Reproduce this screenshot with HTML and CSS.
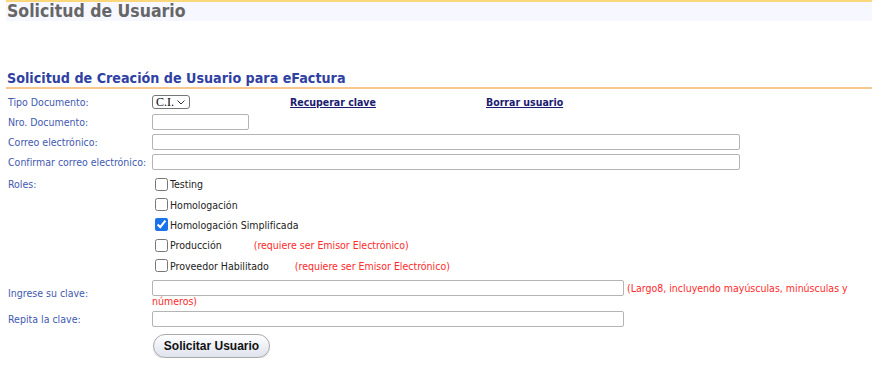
FILE: index.html
```html
<!DOCTYPE html>
<html lang="es">
<head>
    <meta charset="UTF-8">
    <title>Solicitud de Usuario</title>
    <link rel="stylesheet" href="styles.css">
</head>
<body>
    <div class="page">
        <div class="title-bar">Solicitud de Usuario</div>

        <h2 class="section-title">Solicitud de Creación de Usuario para eFactura</h2>

        <form class="form-grid" onsubmit="return false">
            <label class="field-label">Tipo Documento:</label>
            <div class="field first-row">
                <div class="cell-select">
                    <span class="select-wrap">
                        <select class="doc-type">
                            <option>C.I.</option>
                            <option>RUT</option>
                            <option>Pasaporte</option>
                        </select>
                        <svg class="select-arrow" width="8" height="5" viewBox="0 0 8 5"><path d="M0.5 0.5 L4 4 L7.5 0.5" fill="none" stroke="#333" stroke-width="1"/></svg>
                    </span>
                </div>
                <div class="cell-link"><a href="#">Recuperar clave</a></div>
                <div class="cell-link"><a href="#">Borrar usuario</a></div>
            </div>

            <label class="field-label">Nro. Documento:</label>
            <div class="field"><input type="text" class="input-short"></div>

            <label class="field-label">Correo electrónico:</label>
            <div class="field"><input type="text" class="input-long input-dark"></div>

            <label class="field-label">Confirmar correo electrónico:</label>
            <div class="field"><input type="text" class="input-long"></div>

            <label class="field-label label-top">Roles:</label>
            <div class="field roles">
                <div class="role"><input type="checkbox" id="r1"><label for="r1">Testing</label></div>
                <div class="role"><input type="checkbox" id="r2"><label for="r2">Homologación</label></div>
                <div class="role"><input type="checkbox" id="r3" checked><label for="r3">Homologación Simplificada</label></div>
                <div class="role"><input type="checkbox" id="r4"><label for="r4">Producción</label><span class="warn warn-prod">(requiere ser Emisor Electrónico)</span></div>
                <div class="role"><input type="checkbox" id="r5"><label for="r5">Proveedor Habilitado</label><span class="warn warn-prov">(requiere ser Emisor Electrónico)</span></div>
            </div>

            <label class="field-label">Ingrese su clave:</label>
            <div class="field pass-cell"><input type="password" class="input-pass"> <span class="warn">(Largo8, incluyendo mayúsculas, minúsculas y números)</span></div>

            <label class="field-label">Repita la clave:</label>
            <div class="field"><input type="password" class="input-pass"></div>

            <div></div>
            <div class="field submit-cell"><button type="submit" class="btn-submit">Solicitar Usuario</button></div>
        </form>
    </div>
</body>
</html>
```

FILE: styles.css
```css
body {
    margin: 0;
    background: #ffffff;
    font-family: "DejaVu Sans Condensed", "DejaVu Sans", sans-serif;
    font-stretch: condensed;
    font-size: 10.5px;
}

.page {
    padding: 0 12px 0 6px;
}

.title-bar {
    border-top: 2px solid #fbd77c;
    background: #f7f8ff;
    color: #666666;
    font-size: 17.5px;
    font-weight: bold;
    line-height: 19px;
    height: 19px;
    padding-left: 1px;
}

.section-title {
    margin: 49px 0 0;
    padding-left: 1px;
    font-size: 14.2px;
    line-height: 17px;
    color: #2f41a3;
    border-bottom: 2px solid #f8c78f;
}

.form-grid {
    display: grid;
    grid-template-columns: 144px 1fr;
    row-gap: 4px;
    align-items: center;
    margin-top: 5px;
    padding-left: 2px;
}

.field-label {
    color: #4259b0;
    white-space: nowrap;
}

.label-top {
    align-self: start;
    padding-top: 4px;
}

.field {
    min-height: 16px;
    display: flex;
    align-items: center;
}

.first-row {
    height: 16px;
}

.cell-select {
    width: 138px;
}

.cell-link {
    width: 196px;
}

.cell-link a {
    color: #1b1b70;
    font-weight: bold;
}

.select-wrap {
    position: relative;
    display: inline-block;
}

.doc-type {
    -webkit-appearance: none;
    appearance: none;
    font-family: "Liberation Serif", serif;
    font-stretch: normal;
    font-size: 12px;
    line-height: 12px;
    height: 14px;
    width: 38px;
    padding: 0 0 0 3px;
    border: 1px solid #767676;
    border-radius: 3px;
    background: #ffffff;
    color: #000000;
    display: block;
}

.select-arrow {
    position: absolute;
    right: 5px;
    top: 5px;
    pointer-events: none;
}

input[type="text"],
input[type="password"] {
    height: 16px;
    box-sizing: border-box;
    border: 1px solid #b4b4b4;
    border-radius: 2px;
    padding: 0 3px;
    margin: 0;
    font-size: 11px;
}

.input-dark {
    border-top-color: #777777;
}

.input-short {
    width: 97px;
}

.input-long {
    width: 588px;
}

.input-pass {
    width: 472px;
}

.roles {
    display: block;
}

.role {
    height: 20.4px;
    display: flex;
    align-items: center;
    color: #222222;
}

.role input {
    width: 13px;
    height: 13px;
    margin: 0 2px 0 3px;
    accent-color: #1a73e8;
}

.warn {
    color: #ff2a2a;
}

.warn-prod {
    margin-left: 32px;
}

.warn-prov {
    margin-left: 26px;
}

.pass-cell {
    display: block;
    line-height: 11px;
    padding-right: 18px;
}

.submit-cell {
    padding-top: 3px;
}

.btn-submit {
    font-family: "Liberation Sans", Arial, sans-serif;
    font-stretch: normal;
    font-size: 12px;
    font-weight: bold;
    color: #111111;
    width: 117px;
    height: 24px;
    margin-left: 1px;
    border: 1px solid #a9a9a9;
    border-radius: 12px;
    background: linear-gradient(#ffffff, #eef0f6 50%, #dfe3ec);
    box-shadow: 0 1px 1px rgba(0, 0, 0, 0.15);
    cursor: pointer;
}
```
